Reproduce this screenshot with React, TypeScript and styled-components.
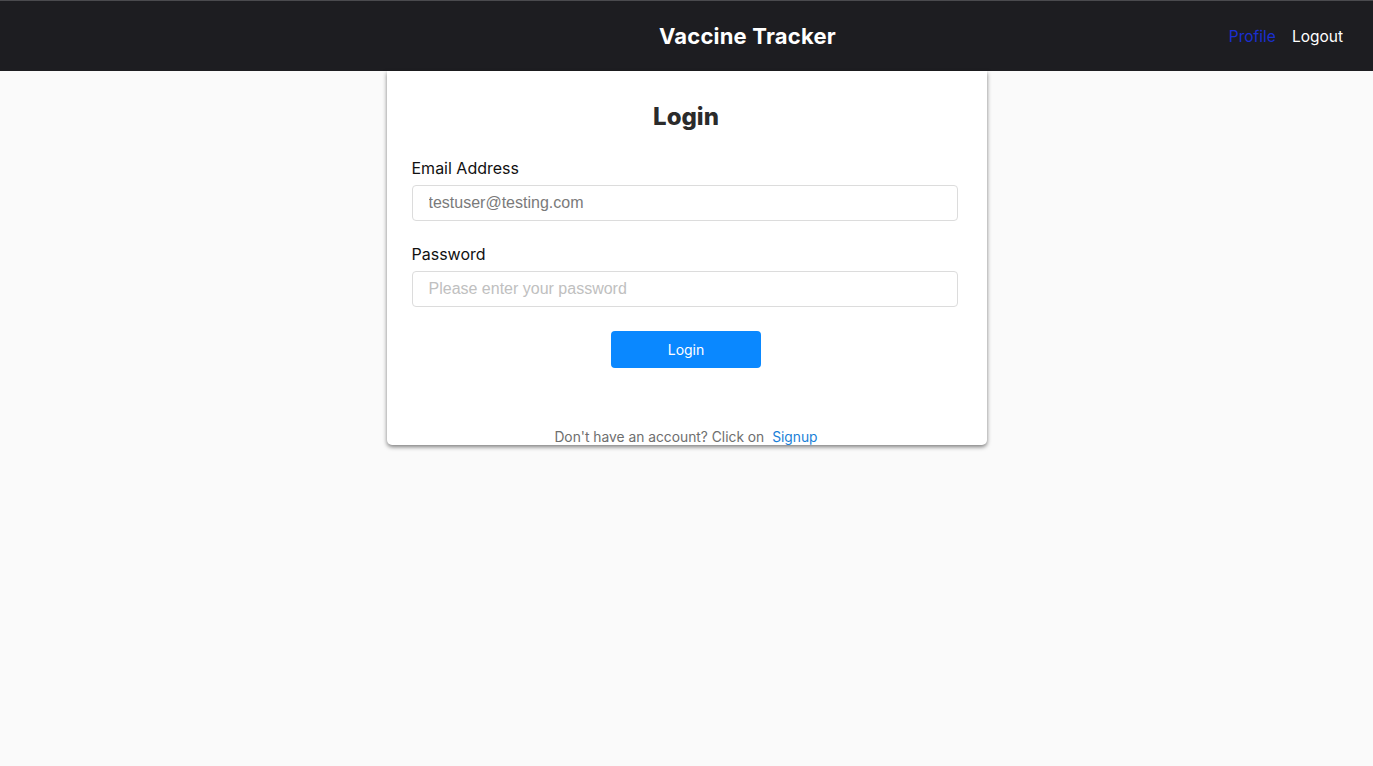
import React from "react";
import styled, { createGlobalStyle } from "styled-components";

const Global = createGlobalStyle`
  html, body { margin: 0; padding: 0; background: #fafafa; }
  body { font-family: Inter, "Noto Sans", "Liberation Sans", sans-serif; }
  * { box-sizing: border-box; }
`;

const Page = styled.div`
  min-height: 766px;
  background: #fafafa;
  display: flex;
  flex-direction: column;
`;

const Header = styled.header`
  height: 71px;
  background: #1d1d21;
  border-top: 1px solid #4a4a4e;
  display: flex;
  align-items: center;
  padding: 0 30px 0 266px;
`;

const Title = styled.h1`
  flex: 1;
  margin: 0;
  text-align: center;
  color: #ffffff;
  font-size: 22px;
  font-weight: 700;
  letter-spacing: 0.2px;
`;

const Nav = styled.nav`
  display: flex;
  gap: 16px;
  align-items: center;
`;

const NavLink = styled.a<{ $active?: boolean }>`
  color: ${(p) => (p.$active ? "#1a2fd0" : "#ffffff")};
  font-size: 15.5px;
  text-decoration: none;
`;

const Main = styled.main`
  display: flex;
  justify-content: center;
`;

const Card = styled.section`
  width: 600px;
  background: #ffffff;
  border-radius: 0 0 5px 5px;
  box-shadow: 0 2px 4px rgba(0, 0, 0, 0.5);
  padding: 31px 26px 0 25px;
  display: flex;
  flex-direction: column;
`;

const Heading = styled.h2`
  margin: 0 0 27px;
  text-align: center;
  font-size: 24px;
  font-weight: 800;
  color: #2b2b2b;
`;

const Field = styled.div`
  display: flex;
  flex-direction: column;
  gap: 7px;
  margin-bottom: 23px;
`;

const Label = styled.label`
  font-size: 16px;
  color: #111;
`;

const Input = styled.input<{ $dark?: boolean }>`
  width: 546px;
  height: 36px;
  border: 1px solid #dcdcdc;
  border-radius: 4px;
  padding: 0 16px;
  font-size: 16px;
  font-family: "Liberation Sans", Arial, sans-serif;
  outline: none;
  &::placeholder {
    color: ${(p) => (p.$dark ? "#7a7a7a" : "#c0c0c0")};
  }
`;

const ButtonRow = styled.div`
  display: flex;
  justify-content: center;
  margin-top: 1px;
`;

const Button = styled.button`
  width: 150px;
  height: 37px;
  background: #0a88ff;
  color: #ffffff;
  border: none;
  border-radius: 4px;
  font-size: 14px;
  font-family: Inter, "Noto Sans", sans-serif;
`;

const Footer = styled.p`
  margin: 60px 0 0;
  text-align: center;
  font-size: 13.8px;
  color: #6e6e6e;
  line-height: 18px;
  height: 17px;
  overflow: hidden;
`;

const FooterLink = styled.a`
  color: #1a7fd8;
  text-decoration: none;
  margin-left: 4px;
`;

export default function App() {
  return (
    <Page>
      <Global />
      <Header>
        <Title>Vaccine Tracker</Title>
        <Nav>
          <NavLink $active href="#">Profile</NavLink>
          <NavLink href="#">Logout</NavLink>
        </Nav>
      </Header>
      <Main>
        <Card>
          <Heading>Login</Heading>
          <Field>
            <Label>Email Address</Label>
            <Input $dark placeholder="testuser@testing.com" />
          </Field>
          <Field>
            <Label>Password</Label>
            <Input type="password" placeholder="Please enter your password" />
          </Field>
          <ButtonRow>
            <Button>Login</Button>
          </ButtonRow>
          <Footer>
            Don't have an account? Click on <FooterLink href="#">Signup</FooterLink>
          </Footer>
        </Card>
      </Main>
    </Page>
  );
}
